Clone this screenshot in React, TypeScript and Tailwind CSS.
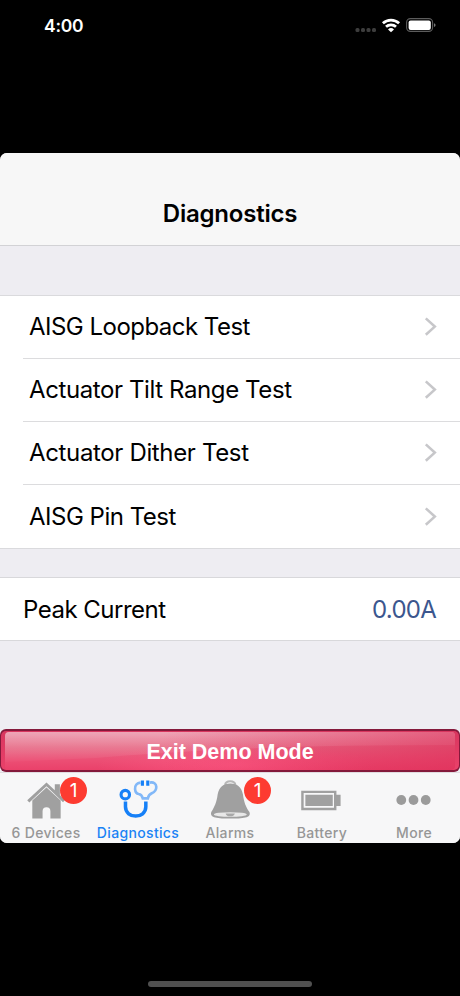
import type { ReactNode } from "react";

const tests = [
  { label: "AISG Loopback Test", spacing: "tracking-[-0.52px]" },
  { label: "Actuator Tilt Range Test", spacing: "tracking-[-0.4px]" },
  { label: "Actuator Dither Test", spacing: "tracking-[-0.35px]" },
  { label: "AISG Pin Test", spacing: "tracking-[-0.5px]" },
];

function StatusBar() {
  return (
    <div className="flex h-[153px] items-start justify-between pl-[44px] pr-[24px] pt-[14px]">
      <span className="text-[17.5px] font-semibold leading-[24px] tracking-[-0.25px] text-white">4:00</span>
      <svg width="82" height="20" viewBox="354 16 82 20" className="mt-[2px]">
        <g fill="#3d3d3d">
          <rect x="355.5" y="28" width="4" height="4" rx="1.5" />
          <rect x="361" y="28" width="4" height="4" rx="1.5" />
          <rect x="366.5" y="28" width="4" height="4" rx="1.5" />
          <rect x="372" y="28" width="4" height="4" rx="1.5" />
        </g>
        <g fill="none" stroke="#fff" strokeWidth="2.7">
          <path d="M382.9 23.3a11.7 11.7 0 0 1 16.2 0" />
          <path d="M386 26.8a7.2 7.2 0 0 1 10 0" />
        </g>
        <path fill="#fff" d="M388 29.5a4.3 4.3 0 0 1 6 0L391 32.3Z" />
        <rect x="406.6" y="18.6" width="26" height="12.8" rx="3.8" fill="none" stroke="#5c5c5c" strokeWidth="1.1" />
        <rect x="408.6" y="20.5" width="22.2" height="9.4" rx="2" fill="#fff" />
        <path fill="#777" d="M434 23.2q1.6.6 1.6 1.9t-1.6 1.9Z" />
      </svg>
    </div>
  );
}

function TestRow({ label, spacing, last }: { label: string; spacing: string; last: boolean }) {
  return (
    <div className="flex h-[63px] bg-white pl-[23px]">
      <div className={`flex flex-1 items-center justify-between pl-[6px] pr-[23px] ${last ? "" : "border-b border-[#dcdcde]"}`}>
        <span className={`text-[24px] leading-[30px] text-black ${spacing}`}>{label}</span>
        <svg width="13" height="20" viewBox="0 0 13 20" fill="none" stroke="#c7c7ca" strokeWidth="2.6">
          <path d="M1.8 1.4 10.8 9.6l-9 8.2" />
        </svg>
      </div>
    </div>
  );
}

function Badge() {
  return (
    <span className="absolute left-[60px] top-[4px] flex h-[27px] w-[27px] items-center justify-center rounded-full bg-[#fd3b31] text-[19px] leading-none text-white">
      1
    </span>
  );
}

function Tab({ label, active, badge, children }: { label: string; active?: boolean; badge?: boolean; children: ReactNode }) {
  return (
    <div className={`relative flex flex-1 flex-col items-center pt-[5px] ${active ? "text-[#1a83f5]" : "text-[#969696]"}`}>
      <svg width="48" height="46" viewBox="0 0 48 46">{children}</svg>
      <span className="whitespace-nowrap text-[14px] font-medium leading-[20px] tracking-[0.34px]">{label}</span>
      {badge && <Badge />}
    </div>
  );
}

function ExitButton() {
  return (
    <div className="mt-auto h-[43px] rounded-[6px] bg-[#84193b] p-px pb-[2px] pt-[2px]">
      <button className="relative flex h-full w-full items-center justify-center overflow-hidden rounded-[5px] bg-gradient-to-b from-[#d9365f] to-[#ea416a]">
        <svg className="absolute inset-0 h-full w-full" viewBox="0 0 458 39" preserveAspectRatio="none">
          <defs>
            <linearGradient id="button-base" x1="0" y1="0" x2="0" y2="1">
              <stop offset="0" stopColor="#e98aa1" />
              <stop offset=".4" stopColor="#e66682" />
              <stop offset=".75" stopColor="#ec4e74" />
              <stop offset="1" stopColor="#ea416a" />
            </linearGradient>
            <linearGradient id="button-gloss" x1="0" y1="0" x2="0" y2="1">
              <stop offset="0" stopColor="#fff" stopOpacity=".24" />
              <stop offset="1" stopColor="#fff" stopOpacity=".02" />
            </linearGradient>
            <linearGradient id="button-shade" x1="0" y1="0" x2="1" y2="0">
              <stop offset=".35" stopColor="#e22d58" stopOpacity="0" />
              <stop offset="1" stopColor="#dc2d57" stopOpacity=".6" />
            </linearGradient>
            <radialGradient id="button-glow">
              <stop offset="0" stopColor="#ff5b86" />
              <stop offset="1" stopColor="#ff5b86" stopOpacity="0" />
            </radialGradient>
          </defs>
          <rect x="4" y="1" width="450" height="38" rx="4" fill="url(#button-base)" />
          <ellipse cx="235" cy="34" rx="140" ry="22" fill="url(#button-glow)" opacity=".7" />
          <path d="M8 1H450Q454 1 454 5V14Q320 14 235 18T95 27L4 31V5Q4 1 8 1Z" fill="url(#button-gloss)" />
          <rect x="4" y="1" width="450" height="38" rx="4" fill="url(#button-shade)" />
        </svg>
        <span className="relative top-[1px] whitespace-nowrap font-['Liberation_Sans',Arial,sans-serif] text-[21.5px] font-bold leading-[24px] text-white">Exit Demo Mode</span>
      </button>
    </div>
  );
}

export default function App() {
  return (
    <div className="flex h-[996px] w-[460px] flex-col bg-black font-['Inter',sans-serif]">
      <StatusBar />
      <main className="flex h-[690px] flex-col overflow-hidden rounded-[7px] bg-[#eeedf2]">
        <header className="flex h-[93px] items-end justify-center border-b border-[#d2d2d5] bg-[#f7f7f7] pb-[16px]">
          <h1 className="text-[24px] font-semibold leading-[30px] tracking-[-0.22px] text-black">Diagnostics</h1>
        </header>
        <section className="mt-[49px] border-y border-[#dadadd]">
          {tests.map((test, index) => (
            <TestRow key={test.label} {...test} last={index === tests.length - 1} />
          ))}
        </section>
        <section className="mt-[28px] flex h-[64px] items-center justify-between border-y border-[#d8d8db] bg-white pl-[23px] pr-[24px] pt-px text-[24px] leading-[30px]">
          <span className="tracking-[-0.5px] text-black">Peak Current</span>
          <span className="tracking-[-0.75px] text-[#3b568e]">0.00A</span>
        </section>
        <ExitButton />
        <nav className="flex h-[71px] border-t border-[#e0dce0] bg-[#f7f7f8]">
          <Tab label="6 Devices" badge>
            <g fill="#a0a0a0">
              <path d="M24.5 4.500 33 12.500V6.500h5.200v11l5.200 5-2 2.200L24.500 8.500 7 25l-2.200-2.300Z" />
              <path d="M24.500 9.700 39 23v18.500H28.500V34q0-4-4-4t-4 4v7.500H10V23Z" />
            </g>
          </Tab>
          <Tab label="Diagnostics" active>
            <g fill="none">
              <path d="M26.500 4.700c-3.500.3-5.800 3-5.500 6.600.2 2.500 1.200 4.600 3.700 5 3 .4 3.600 2.200 4.200 4.500h5.200c.5-2.600 1.200-4 4-5.200 3.500-1.500 4.700-3.700 4.600-6.500-.1-3.200-2.700-5.200-6.500-4.400" stroke="#82b8f8" strokeWidth="2.7" />
              <path d="M28.500 2.500v5.300M34 2.500v5.300" stroke="#1680f7" strokeWidth="3.2" />
              <circle cx="11" cy="17" r="4.3" stroke="#1680f7" strokeWidth="3.2" />
              <path d="M11.200 24V29.500c0 12.600 20.800 12.600 20.800 0V24" stroke="#1680f7" strokeWidth="3.6" />
            </g>
          </Tab>
          <Tab label="Alarms" badge>
            <path d="M19 7Q19.500 3.300 24.200 3.300T29.500 7" fill="none" stroke="#b7b7b7" strokeWidth="2.2" />
            <path d="M24.300 5.500C17 5.500 13 9 11.400 16.500 10.300 25 8.300 29 5 34.500c-2.600 6.500 7 7 19.300 7s22.400-.5 19.400-7C40 29 38.400 25 37.200 16.500 35.700 9 31.500 5.500 24.300 5.500Z" fill="#a0a0a0" />
            <ellipse cx="24.300" cy="37.300" rx="16.800" ry="2.400" fill="#e8e8e8" />
            <path d="M19.500 36.200h9.500q-1 3-4.800 3t-4.700-3Z" fill="#a8a8a8" />
          </Tab>
          <Tab label="Battery">
            <path d="M4 14.200h33.500v17.400H4Z" fill="none" stroke="#a0a0a0" strokeWidth="2.500" />
            <path d="M7 17.200h28v11.400H7ZM38.200 17.200h4.800v11.400h-4.800Z" fill="#a0a0a0" />
          </Tab>
          <Tab label="More">
            <g fill="#9b9b9b">
              <circle cx="11" cy="22.500" r="5" />
              <circle cx="23.500" cy="22.500" r="5" />
              <circle cx="36" cy="22.500" r="5" />
            </g>
          </Tab>
        </nav>
      </main>
      <div className="mx-auto mb-[9px] mt-auto h-[6px] w-[164px] rounded-full bg-[#505050]" />
    </div>
  );
}
